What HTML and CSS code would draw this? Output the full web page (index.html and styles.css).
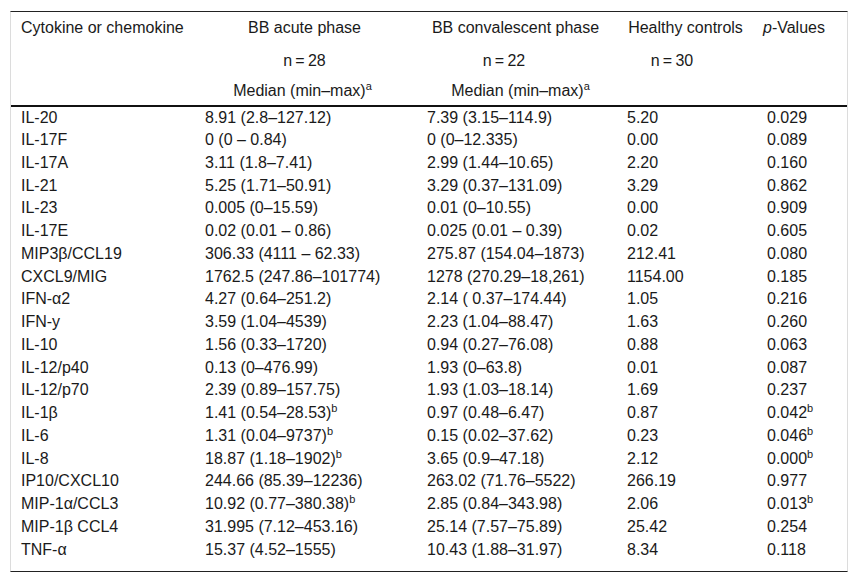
FILE: index.html
```html
<!DOCTYPE html>
<html lang="en">
<head>
<meta charset="utf-8">
<title>Cytokine table</title>
<link rel="stylesheet" href="styles.css">
</head>
<body>
<div class="frame">
<table class="data">
<thead>
<tr class="h1">
<th class="c1">Cytokine or chemokine</th>
<th>BB acute phase</th>
<th>BB convalescent phase</th>
<th>Healthy controls</th>
<th class="pv"><i>p</i>-Values</th>
</tr>
<tr class="h2">
<th class="c1"></th>
<th>n&thinsp;=&thinsp;28</th>
<th class="n22">n&thinsp;=&thinsp;22</th>
<th class="n30">n&thinsp;=&thinsp;30</th>
<th></th>
</tr>
<tr class="h3">
<th class="c1"></th>
<th class="med2">Median (min–max)<sup>a</sup></th>
<th class="med3">Median (min–max)<sup>a</sup></th>
<th></th>
<th></th>
</tr>
</thead>
<tbody>
<tr><td class="c1">IL-20</td><td>8.91 (2.8–127.12)</td><td>7.39 (3.15–114.9)</td><td>5.20</td><td>0.029</td></tr>
<tr><td class="c1">IL-17F</td><td>0 (0 – 0.84)</td><td>0 (0–12.335)</td><td>0.00</td><td>0.089</td></tr>
<tr><td class="c1">IL-17A</td><td>3.11 (1.8–7.41)</td><td>2.99 (1.44–10.65)</td><td>2.20</td><td>0.160</td></tr>
<tr><td class="c1">IL-21</td><td>5.25 (1.71–50.91)</td><td>3.29 (0.37–131.09)</td><td>3.29</td><td>0.862</td></tr>
<tr><td class="c1">IL-23</td><td>0.005 (0–15.59)</td><td>0.01 (0–10.55)</td><td>0.00</td><td>0.909</td></tr>
<tr><td class="c1">IL-17E</td><td>0.02 (0.01 – 0.86)</td><td>0.025 (0.01 – 0.39)</td><td>0.02</td><td>0.605</td></tr>
<tr><td class="c1">MIP3β/CCL19</td><td>306.33 (4111 – 62.33)</td><td>275.87 (154.04–1873)</td><td>212.41</td><td>0.080</td></tr>
<tr><td class="c1">CXCL9/MIG</td><td>1762.5 (247.86–101774)</td><td>1278 (270.29–18,261)</td><td>1154.00</td><td>0.185</td></tr>
<tr><td class="c1">IFN-α2</td><td>4.27 (0.64–251.2)</td><td>2.14 ( 0.37–174.44)</td><td>1.05</td><td>0.216</td></tr>
<tr><td class="c1">IFN-y</td><td>3.59 (1.04–4539)</td><td>2.23 (1.04–88.47)</td><td>1.63</td><td>0.260</td></tr>
<tr><td class="c1">IL-10</td><td>1.56 (0.33–1720)</td><td>0.94 (0.27–76.08)</td><td>0.88</td><td>0.063</td></tr>
<tr><td class="c1">IL-12/p40</td><td>0.13 (0–476.99)</td><td>1.93 (0–63.8)</td><td>0.01</td><td>0.087</td></tr>
<tr><td class="c1">IL-12/p70</td><td>2.39 (0.89–157.75)</td><td>1.93 (1.03–18.14)</td><td>1.69</td><td>0.237</td></tr>
<tr><td class="c1">IL-1β</td><td>1.41 (0.54–28.53)<sup>b</sup></td><td>0.97 (0.48–6.47)</td><td>0.87</td><td>0.042<sup>b</sup></td></tr>
<tr><td class="c1">IL-6</td><td>1.31 (0.04–9737)<sup>b</sup></td><td>0.15 (0.02–37.62)</td><td>0.23</td><td>0.046<sup>b</sup></td></tr>
<tr><td class="c1">IL-8</td><td>18.87 (1.18–1902)<sup>b</sup></td><td>3.65 (0.9–47.18)</td><td>2.12</td><td>0.000<sup>b</sup></td></tr>
<tr><td class="c1">IP10/CXCL10</td><td>244.66 (85.39–12236)</td><td>263.02 (71.76–5522)</td><td>266.19</td><td>0.977</td></tr>
<tr><td class="c1">MIP-1α/CCL3</td><td>10.92 (0.77–380.38)<sup>b</sup></td><td>2.85 (0.84–343.98)</td><td>2.06</td><td>0.013<sup>b</sup></td></tr>
<tr><td class="c1">MIP-1β CCL4</td><td>31.995 (7.12–453.16)</td><td>25.14 (7.57–75.89)</td><td>25.42</td><td>0.254</td></tr>
<tr><td class="c1">TNF-α</td><td>15.37 (4.52–1555)</td><td>10.43 (1.88–31.97)</td><td>8.34</td><td>0.118</td></tr>
</tbody>
</table>
</div>
</body>
</html>
```
FILE: styles.css
```css
html, body {
  margin: 0;
  padding: 0;
  background: #ffffff;
}

body {
  font-family: "Liberation Sans", Arial, sans-serif;
  font-size: 16px;
  color: #1a1a1a;
}

.frame {
  margin: 11px 11px 0 10px;
  border-top: 1px solid #222;
  border-bottom: 1px solid #222;
  border-left: 1px solid #dcdcdc;
  border-right: 1px solid #dcdcdc;
  padding-bottom: 10px;
}

.data {
  width: 100%;
  border-collapse: collapse;
  table-layout: fixed;
}

.data th,
.data td {
  box-sizing: border-box;
  padding: 0 16px 0 7px;
  font-weight: normal;
  white-space: nowrap;
  line-height: 18px;
}

.data th {
  text-align: center;
}

.data td {
  text-align: left;
}

.data th:nth-child(1), .data td:nth-child(1) { width: 187px; padding-left: 10px; text-align: left; }
.data th:nth-child(2), .data td:nth-child(2) { width: 222px; }
.data th:nth-child(3), .data td:nth-child(3) { width: 200px; }
.data th:nth-child(4), .data td:nth-child(4) { width: 140px; }
.data th:nth-child(5), .data td:nth-child(5) { width: 87px; padding-right: 4px; }

.data th.pv { text-align: left; padding-left: 3px; }
.data th.n22 { padding-right: 39px; }
.data th.n30 { padding-right: 43px; }
.data th.med2 { padding-right: 20px; }
.data th.med3 { padding-right: 6px; }

.data thead tr.h1 { height: 32px; }
.data thead tr.h2 { height: 33px; }
.data thead tr.h3 { height: 29px; }
.data thead tr.h3 th { border-bottom: 2px solid #111; }

.data tbody tr { height: 22.75px; }

.data sup {
  font-size: 11px;
  line-height: 0;
  vertical-align: 6px;
}
```
